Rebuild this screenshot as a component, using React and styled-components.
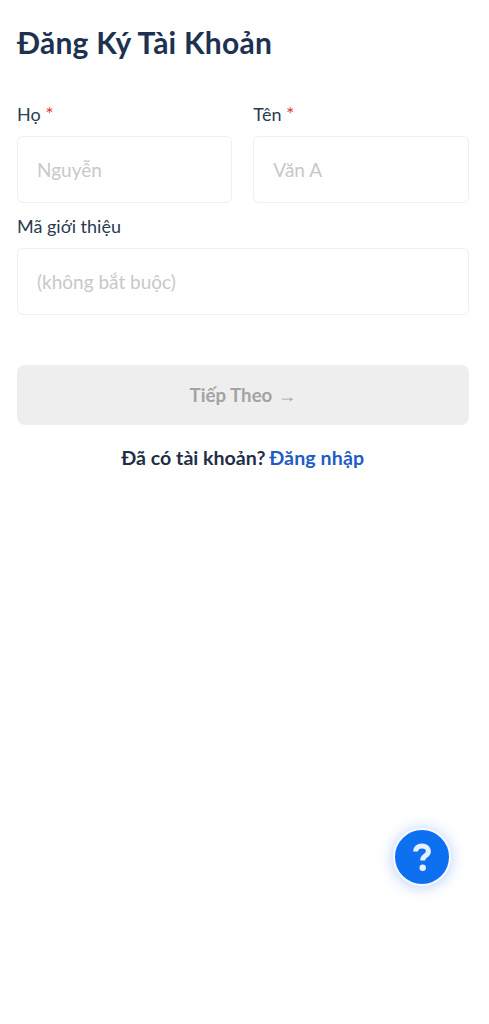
import styled, { createGlobalStyle } from "styled-components";

const GlobalStyle = createGlobalStyle`
  html, body {
    margin: 0;
    padding: 0;
    background: #fff;
  }
  * {
    box-sizing: border-box;
  }
`;

const Page = styled.div`
  position: relative;
  height: 1024px;
  padding: 23px 20.5px 0 17px;
  font-family: "Lato", "Noto Sans", sans-serif;
  color: #1f3049;
  overflow: hidden;
`;

const Title = styled.h1`
  margin: 0 0 41px;
  font-size: 30px;
  line-height: 38px;
  font-weight: 700;
  letter-spacing: 0.25px;
  color: #1d3150;
`;

const Row = styled.div`
  display: flex;
  gap: 21px;
`;

const Field = styled.div`
  flex: 1;
  min-width: 0;
  margin-bottom: 11px;
`;

const Label = styled.label`
  display: block;
  margin-bottom: 10px;
  font-size: 18px;
  line-height: 24px;
  color: #2a3a50;
`;

const Required = styled.span`
  color: #d9443f;
  font-size: 20px;
  line-height: 0;
`;

const Input = styled.input`
  display: block;
  width: 100%;
  height: 67px;
  padding: 0 19px;
  border: 1.5px solid #efefef;
  border-radius: 6px;
  background: #fff;
  font: inherit;
  font-size: 19px;
  outline: none;

  &::placeholder {
    color: #c8c8ca;
    opacity: 1;
  }
`;

const NextButton = styled.button`
  display: block;
  width: 100%;
  height: 60px;
  margin-top: 50px;
  border: 0;
  border-radius: 8px;
  background: #eeeeee;
  color: #a3a3a3;
  font: inherit;
  font-size: 18.7px;
  font-weight: 700;
`;

const Arrow = styled.span`
  margin-left: 1px;
  font-family: "Liberation Sans", sans-serif;
  font-size: 18px;
  line-height: 0;
  font-weight: 400;
`;

const LoginLine = styled.p`
  margin: 20px 0 0;
  text-align: center;
  font-size: 19.6px;
  line-height: 26px;
  font-weight: 700;
  color: #1f2f47;
`;

const LoginLink = styled.a`
  margin-left: -1px;
  letter-spacing: 0.1px;
  color: #1f5dc4;
  text-decoration: none;
`;

const HelpButton = styled.button`
  position: absolute;
  left: 393px;
  top: 828px;
  display: flex;
  align-items: center;
  justify-content: center;
  width: 58px;
  height: 58px;
  padding: 0;
  border: 2.5px solid #f6faff;
  border-radius: 50%;
  background: #0d70f0;
  box-shadow: 0 1px 14px 1px rgba(60, 120, 240, 0.32);
`;

const HelpIcon = () => (
  <svg width="18" height="29" viewBox="0 0 18 29" fill="none">
    <path
      d="M2.6 8.6C2.6 5 5.2 3 9 3s6.4 2 6.4 5.2c0 2.4-1.4 3.6-3.2 4.8-1.7 1.2-2.5 2-2.5 4.4"
      stroke="#e6f0ff"
      strokeWidth="5"
    />
    <circle cx="9.7" cy="24.8" r="3.2" fill="#e6f0ff" />
  </svg>
);

const App = () => {
  return (
    <>
      <GlobalStyle />
      <Page>
        <Title>Đăng Ký Tài Khoản</Title>
        <Row>
          <Field>
            <Label>
              Họ <Required>*</Required>
            </Label>
            <Input placeholder="Nguyễn" />
          </Field>
          <Field>
            <Label>
              Tên <Required>*</Required>
            </Label>
            <Input placeholder="Văn A" />
          </Field>
        </Row>
        <Field>
          <Label>Mã giới thiệu</Label>
          <Input placeholder="(không bắt buộc)" />
        </Field>
        <NextButton disabled>
          Tiếp Theo <Arrow>→</Arrow>
        </NextButton>
        <LoginLine>
          Đã có tài khoản? <LoginLink href="#">Đăng nhập</LoginLink>
        </LoginLine>
        <HelpButton aria-label="Trợ giúp">
          <HelpIcon />
        </HelpButton>
      </Page>
    </>
  );
};

export default App;
